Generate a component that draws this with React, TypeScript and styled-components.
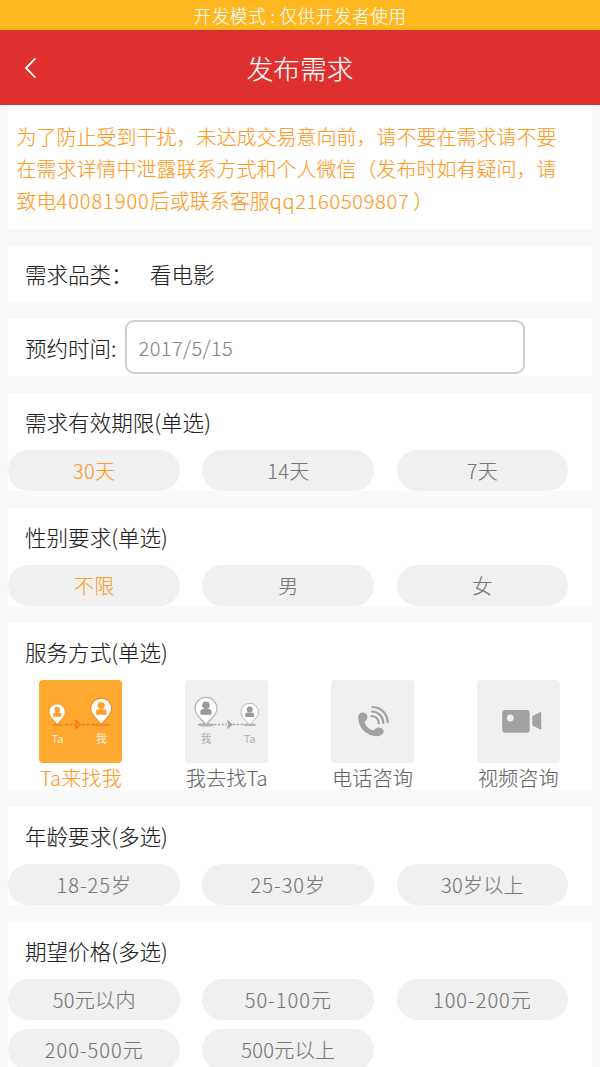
import React from 'react';
import styled, { createGlobalStyle } from 'styled-components';

const GlobalStyle = createGlobalStyle`
  * { box-sizing: border-box; }
  body {
    margin: 0;
    height: 1067px;
    overflow: hidden;
    background: #f9f9f9;
    font-family: 'Noto Sans CJK SC', sans-serif;
    font-weight: 300;
    -webkit-text-stroke: 0.12px;
  }
`;

const Screen = styled.div`
  display: flex;
  flex-direction: column;
  width: 600px;
  height: 1067px;
  overflow: hidden;
`;

const DevBanner = styled.div`
  flex: none;
  height: 30px;
  padding-top: 1px;
  background: #ffb71f;
  color: #fff;
  font-size: 17.8px;
  line-height: 29px;
  letter-spacing: 0.35px;
  text-align: center;
  white-space: pre;
`;

const Header = styled.header`
  flex: none;
  display: grid;
  grid-template-columns: 60px 1fr 60px;
  align-items: center;
  height: 75px;
  background: #df3030;
  color: #fff;
`;

const BackButton = styled.button`
  display: flex;
  padding: 0 0 0 24px;
  border: 0;
  background: none;
  color: inherit;
`;

const Title = styled.h1`
  margin: 0;
  font-size: 26.7px;
  font-weight: 300;
  line-height: 40px;
  text-align: center;
`;

const Content = styled.main`
  display: flex;
  flex-direction: column;
  gap: 16.7px;
  padding: 0 8px;
`;

const Card = styled.section<{ $height: number }>`
  flex: none;
  height: ${(p) => p.$height}px;
  background: #fff;
`;

const Notice = styled(Card)`
  padding: 16px 8.5px 0;
  color: #ff9a24;
  font-size: 20px;
  line-height: 31.8px;
  white-space: nowrap;
`;

const Digits = styled.span<{ $spacing: number; $after?: number }>`
  margin-right: ${(p) => p.$after ?? 0}px;
  letter-spacing: ${(p) => p.$spacing}px;
`;

const Row = styled(Card)`
  display: flex;
  align-items: center;
  padding: 0 0 1px 17px;
  color: #222;
  font-size: 21.5px;
`;

const RowLabel = styled.span<{ $width: number }>`
  flex: none;
  width: ${(p) => p.$width}px;
  white-space: nowrap;
`;

const DateField = styled.input`
  width: 400px;
  height: 54px;
  padding: 1px 12px 0 11.5px;
  border: 2px solid #cfcfcf;
  border-radius: 9px;
  outline: 0;
  background: #fff;
  color: #858585;
  font: 300 20px 'Noto Sans CJK SC', sans-serif;
  letter-spacing: 0.45px;
  -webkit-text-stroke: 0.12px;
`;

const SectionTitle = styled.h2`
  height: 57px;
  margin: 0;
  padding: 0 17px;
  color: #222;
  font-size: 21.55px;
  font-weight: 300;
  line-height: 57px;
`;

const Pills = styled.div`
  display: grid;
  grid-template-columns: repeat(3, 171.7px);
  gap: 8.4px 22.4px;
  padding-left: 0.4px;
`;

const Pill = styled.button<{ $active?: boolean; $spacing: number }>`
  height: 41.6px;
  padding: 0;
  border: 0;
  border-radius: 21px;
  background: #f0f0f0;
  color: ${(p) => (p.$active ? '#ff9a24' : '#777')};
  font: 300 20px 'Noto Sans CJK SC', sans-serif;
  letter-spacing: ${(p) => p.$spacing}px;
  -webkit-text-stroke: 0.12px;
`;

const Tiles = styled.div`
  display: grid;
  grid-template-columns: repeat(4, 145.8px);
`;

const Tile = styled.div<{ $active?: boolean }>`
  display: flex;
  flex-direction: column;
  align-items: center;
  color: ${(p) => (p.$active ? '#ff9a24' : '#666')};
  font-size: 20.2px;
  line-height: 29px;
`;

const TileIcon = styled.svg<{ $active?: boolean }>`
  width: 83px;
  height: 83px;
  border-radius: 4px;
  background: ${(p) => (p.$active ? '#ffa931' : '#f0f0f0')};
`;

const PinLabel = styled.text`
  font-size: 11px;
  font-weight: 400;
  text-anchor: middle;
`;

type PinProps = { x: number; y: number; r: number; line: string; person: string; fill: string };

const Pin = ({ x, y, r, line, person, fill }: PinProps) => {
  const s = r / 10.5;
  const tip = (44.8 - y) / s;
  return (
    <g transform={`translate(${x} ${y}) scale(${s})`}>
      <ellipse cx="0" cy={tip} rx="8" ry="1.6" fill={line} />
      <path
        d={`M0 ${tip}C-3 10.5-10.3 7-10.3 0A10.3 10.3 0 0 1 10.3 0C10.3 7 3 10.5 0 ${tip}Z`}
        fill={fill}
        stroke={line}
        strokeWidth="1.1"
      />
      <circle cx="0" cy="-3" r="3.5" fill={person} />
      <path d="M-5.2 5V3Q-5.2 .6-2.6 .6H2.6Q5.2 .6 5.2 3V5Q5.2 6 4.2 6H-4.2Q-5.2 6-5.2 5Z" fill={person} />
    </g>
  );
};

const ToMeIcon = () => (
  <TileIcon $active viewBox="0 0 83 83">
    <path d="M26 44.5H37M43 44.5H57" stroke="#f5731c" strokeWidth="1.5" strokeDasharray="2.8 1.8" />
    <path d="M37 40.5L41.3 44.5L37 48.5Z" fill="none" stroke="#f5731c" strokeWidth="1.4" />
    <Pin x={18.2} y={32} r={8.3} line="#f58a24" person="#ffa12c" fill="#fff" />
    <Pin x={62.2} y={28.6} r={10.7} line="#f58a24" person="#ffa12c" fill="#fff" />
    <PinLabel x="18.4" y="62.8" fill="#fff0dc">Ta</PinLabel>
    <PinLabel x="62.2" y="62.8" fill="#fff0dc">我</PinLabel>
  </TileIcon>
);

const ToThemIcon = () => (
  <TileIcon viewBox="0 0 83 83">
    <path d="M29 44.5H42M48 44.5H60" stroke="#aaa" strokeWidth="1.5" strokeDasharray="2.2 1.6" />
    <path d="M42 39.8L48 44.5L42 49.2L43.2 44.5Z" fill="#a2a2a2" />
    <Pin x={21} y={28.4} r={11.2} line="#b4b4b4" person="#999" fill="#fff" />
    <Pin x={64.7} y={32} r={8.9} line="#b4b4b4" person="#999" fill="#fff" />
    <PinLabel x="21" y="62.8" fill="#b0b0b0">我</PinLabel>
    <PinLabel x="64.6" y="62.8" fill="#b0b0b0">Ta</PinLabel>
  </TileIcon>
);

const PhoneIcon = () => (
  <TileIcon viewBox="0 0 83 83">
    <path
      d="M29 33.3C31.5 31.6 35 32.6 36 35.2C37 37.8 36.3 40 33.7 41.5C34.2 46 37.8 49.6 43.3 50.3C44.3 47.6 47.3 46.7 50.2 47.9C53 49 53.3 52 51.5 54.1C49.5 56.5 45.5 56.8 41 55.5C33.5 53.3 28 47 27.3 39C27 36.5 27.3 34.5 29 33.3Z"
      fill="#a2a2a2"
    />
    <g fill="none" stroke="#a2a2a2" strokeWidth="2.2" strokeLinecap="round">
      <path d="M41.5 27C50 27.3 56.3 33.8 56.8 42.3" />
      <path d="M41 31.5C47.5 31.8 52 36.4 52.3 43" />
      <path d="M40.5 36C44.8 36.3 47.6 39.2 47.8 43.3" />
    </g>
  </TileIcon>
);

const VideoIcon = () => (
  <TileIcon viewBox="0 0 83 83">
    <rect x="25.2" y="30" width="27.5" height="22.8" rx="3" fill="#a2a2a2" />
    <circle cx="33.3" cy="38" r="3.4" fill="#f0f0f0" />
    <path d="M55.3 37Q55.3 36.2 56 35.7L62.8 32.3Q64.2 31.7 64.2 33V48.5Q64.2 50 62.8 49.3L56 45.7Q55.3 45.2 55.3 44.4Z" fill="#a2a2a2" />
  </TileIcon>
);

const services = [
  { label: 'Ta来找我', Icon: ToMeIcon, active: true },
  { label: '我去找Ta', Icon: ToThemIcon },
  { label: '电话咨询', Icon: PhoneIcon },
  { label: '视频咨询', Icon: VideoIcon },
];

type ChoiceProps = { title: string; options: string[]; selected?: string; height?: number };

const ChoiceCard = ({ title, options, selected, height = 98.3 }: ChoiceProps) => (
  <Card $height={height}>
    <SectionTitle>{title}</SectionTitle>
    <Pills>
      {options.map((option) => (
        <Pill key={option} $active={option === selected} $spacing={option.includes('-') ? 1 : 0.3}>
          {option}
        </Pill>
      ))}
    </Pills>
  </Card>
);

export default function App() {
  return (
    <>
      <GlobalStyle />
      <Screen>
        <DevBanner>开发模式 : 仅供开发者使用</DevBanner>
        <Header>
          <BackButton aria-label="返回">
            <svg width="13" height="22" viewBox="0 0 13 22" fill="none" stroke="#fff" strokeWidth="1.8">
              <path d="M11.4 1.4L2 11L11.4 20.6" />
            </svg>
          </BackButton>
          <Title>发布需求</Title>
        </Header>
        <Content>
          <Notice $height={124.3}>
            为了防止受到干扰，未达成交易意向前，请不要在需求请不要<br />
            在需求详情中泄露联系方式和个人微信（发布时如有疑问，请<br />
            致电<Digits $spacing={0.95}>40081900</Digits>后或联系客服
            <Digits $spacing={0.7} $after={4}>qq2160509807</Digits>）
          </Notice>
          <Row $height={56.5}>
            <RowLabel $width={125}>需求品类：</RowLabel>
            <span>看电影</span>
          </Row>
          <Row $height={56.7}>
            <RowLabel $width={100}>预约时间:</RowLabel>
            <DateField defaultValue="2017/5/15" />
          </Row>
          <ChoiceCard title="需求有效期限(单选)" options={['30天', '14天', '7天']} selected="30天" />
          <ChoiceCard title="性别要求(单选)" options={['不限', '男', '女']} selected="不限" />
          <Card $height={167.5}>
            <SectionTitle>服务方式(单选)</SectionTitle>
            <Tiles>
              {services.map(({ label, Icon, active }) => (
                <Tile key={label} $active={active}>
                  <Icon />
                  {label}
                </Tile>
              ))}
            </Tiles>
          </Card>
          <ChoiceCard title="年龄要求(多选)" options={['18-25岁', '25-30岁', '30岁以上']} />
          <ChoiceCard
            title="期望价格(多选)"
            options={['50元以内', '50-100元', '100-200元', '200-500元', '500元以上']}
            height={165}
          />
        </Content>
      </Screen>
    </>
  );
}
